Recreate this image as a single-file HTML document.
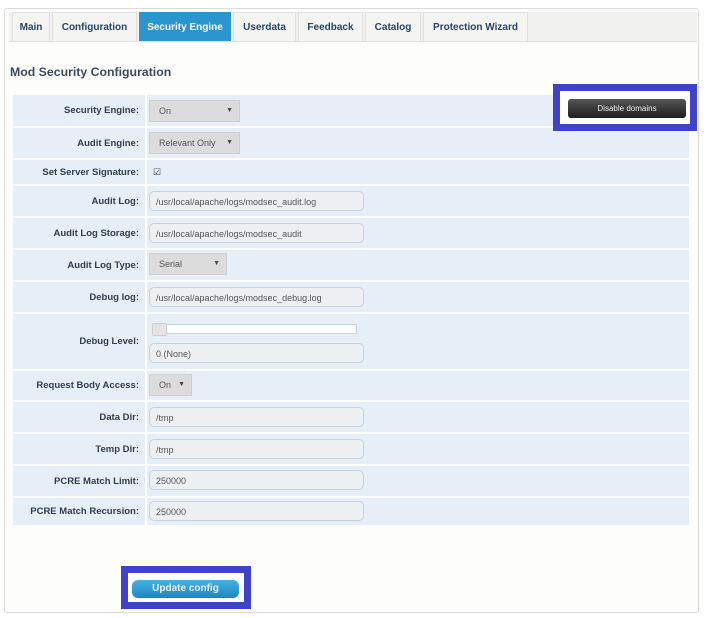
<!DOCTYPE html>
<html><head><style>
body{margin:0;width:709px;height:618px;background:#fff;font-family:"Liberation Sans",Arial,sans-serif;position:relative;overflow:hidden}
.panel{position:absolute;left:4px;top:8px;width:693px;height:603px;border:1px solid #dcdcdc;border-radius:3px;background:#fdfdfc}
.tabbar{position:absolute;left:9px;top:12px;width:688px;height:29px;background:#f1f1ef;border-bottom:1px solid #e2e2e2}
.tab{position:absolute;top:12px;height:29px;line-height:29px;font-size:10px;font-weight:bold;color:#24456b;text-align:center;background:#f4f4f2;border:1px solid #e0e0e0;border-bottom:none;box-sizing:border-box}
.tab.act{background:#2a95cf;color:#fff;border-color:#2a95cf}
h1{position:absolute;left:10px;top:65px;margin:0;font-size:12.3px;font-weight:bold;color:#3b4c5e}
.row{position:absolute;left:13px;width:676px;background:#e6eef8}
.lab{position:absolute;left:0;width:132px;top:0;bottom:0;text-align:right;font-size:9.5px;font-weight:bold;color:#2f3f50;display:flex;align-items:center;justify-content:flex-end;border-right:2px solid #fff}
.lab span{padding-right:6px}
.inp{position:absolute;left:136px;width:215px;height:20px;border:1px solid #c7d3dc;border-radius:5px;background:#edf0f2;font-size:9px;color:#555;line-height:20px;padding-left:6px;box-sizing:border-box}
.sel{position:absolute;left:136px;height:22px;background:#dcdcdc;border:1px solid #c9d2d8;font-size:9px;color:#555;line-height:20px;padding-left:9px;box-sizing:border-box}
.sel:after{content:"▼";position:absolute;right:6px;top:0;line-height:20px;font-size:7px;color:#444}
.box{position:absolute;border:7px solid #3f43c9;background:#fff;box-sizing:border-box}
</style></head><body>
<div class="panel"></div>
<div class="tabbar"></div>
<div class="tab" style="left:12px;width:38px">Main</div>
<div class="tab" style="left:52px;width:85px">Configuration</div>
<div class="tab act" style="left:139px;width:92px">Security Engine</div>
<div class="tab" style="left:233px;width:63px">Userdata</div>
<div class="tab" style="left:298px;width:65px">Feedback</div>
<div class="tab" style="left:365px;width:56px">Catalog</div>
<div class="tab" style="left:423px;width:105px">Protection Wizard</div>
<h1>Mod Security Configuration</h1>

<div class="row" style="top:95px;height:31px"><div class="lab"><span>Security Engine:</span></div><div class="sel" style="top:5px;width:91px">On</div></div>
<div class="row" style="top:128px;height:30px"><div class="lab"><span>Audit Engine:</span></div><div class="sel" style="top:4px;width:91px">Relevant Only</div></div>
<div class="row" style="top:160px;height:24px"><div class="lab"><span>Set Server Signature:</span></div><div style="position:absolute;left:140px;top:7px;font-size:9px;color:#333">☑</div></div>
<div class="row" style="top:186px;height:30px"><div class="lab"><span>Audit Log:</span></div><div class="inp" style="top:5px">/usr/local/apache/logs/modsec_audit.log</div></div>
<div class="row" style="top:218px;height:30px"><div class="lab"><span>Audit Log Storage:</span></div><div class="inp" style="top:5px">/usr/local/apache/logs/modsec_audit</div></div>
<div class="row" style="top:250px;height:30px"><div class="lab"><span>Audit Log Type:</span></div><div class="sel" style="top:3px;width:78px">Serial</div></div>
<div class="row" style="top:282px;height:30px"><div class="lab"><span>Debug log:</span></div><div class="inp" style="top:5px">/usr/local/apache/logs/modsec_debug.log</div></div>
<div class="row" style="top:314px;height:55px"><div class="lab"><span>Debug Level:</span></div>
<div style="position:absolute;left:140px;top:10px;width:202px;height:8px;background:#fff;border:1px solid #c9d6e2"></div>
<div style="position:absolute;left:139px;top:9px;width:13px;height:11px;background:#e4e4e4;border:1px solid #d0d0d0;border-radius:2px"></div>
<div class="inp" style="top:29px">0 (None)</div></div>
<div class="row" style="top:371px;height:29px"><div class="lab"><span>Request Body Access:</span></div><div class="sel" style="top:3px;width:43px">On</div></div>
<div class="row" style="top:402px;height:30px"><div class="lab"><span>Data Dir:</span></div><div class="inp" style="top:5px">/tmp</div></div>
<div class="row" style="top:434px;height:30px"><div class="lab"><span>Temp Dir:</span></div><div class="inp" style="top:5px">/tmp</div></div>
<div class="row" style="top:466px;height:30px"><div class="lab"><span>PCRE Match Limit:</span></div><div class="inp" style="top:4px">250000</div></div>
<div class="row" style="top:498px;height:27px"><div class="lab"><span>PCRE Match Recursion:</span></div><div class="inp" style="top:3px">250000</div></div>

<div class="box" style="left:553px;top:84px;width:144px;height:47px"></div>
<div style="position:absolute;left:568px;top:99px;width:118px;height:19px;border-radius:3px;background:linear-gradient(#555,#1e1e1e);color:#eee;font-size:8px;text-align:center;line-height:19px">Disable domains</div>

<div class="box" style="left:121px;top:566px;width:130px;height:43px"></div>
<div style="position:absolute;left:132px;top:580px;width:107px;height:18px;border-radius:6px;background:linear-gradient(#45b2e3,#1d86c0);color:#e8f2f8;font-size:10px;font-weight:bold;text-align:center;line-height:18px">Update config</div>
</body></html>
